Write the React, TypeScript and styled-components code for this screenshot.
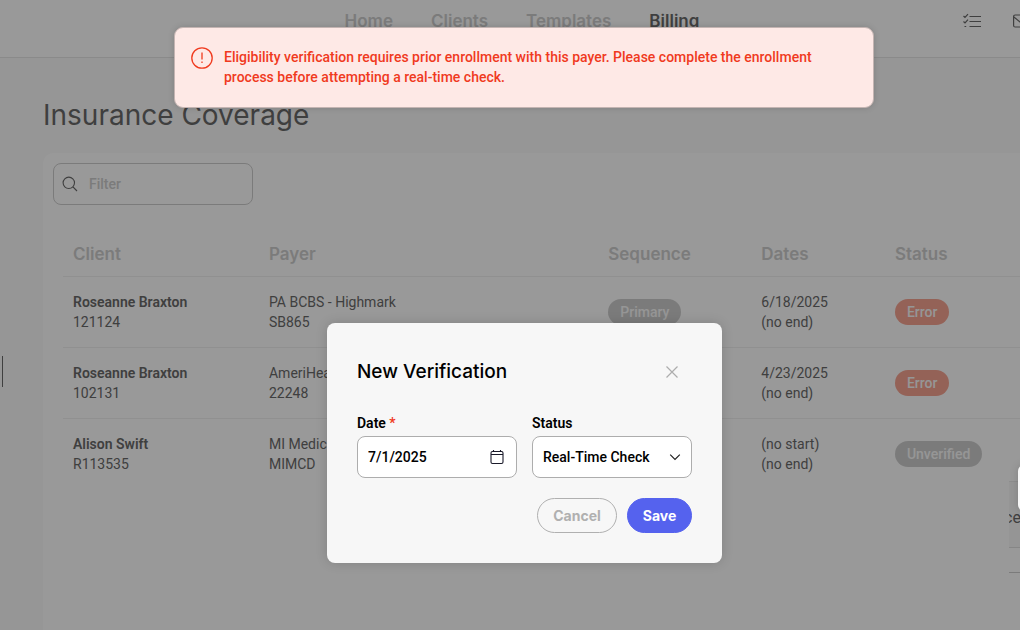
import React from "react";
import styled, { createGlobalStyle } from "styled-components";

const displayFont = `Inter, "Liberation Sans", sans-serif`;

const GlobalStyle = createGlobalStyle`
  *, *::before, *::after { box-sizing: border-box; }
  html { overflow: hidden; }
  body { margin: 0; background: #fafafa; }
  body, button, input, select {
    font-family: Roboto, "Liberation Sans", sans-serif;
    font-size: 14px;
    line-height: 20px;
  }
`;

/* The application canvas is a little wider than the window and is clipped on the right. */
const Shell = styled.div`
  position: relative;
  width: calc(100% + 28px);
  min-height: 100vh;
  display: flex;
  flex-direction: column;
  color: #6a6a6a;
`;

const Header = styled.header`
  display: grid;
  grid-template-columns: 1fr auto 1fr;
  height: 58px;
  background: #ffffff;
  border-bottom: 1px solid #e6e6e6;
`;

const Nav = styled.nav`
  grid-column: 2;
  display: flex;
  gap: 38px;
  padding: 11px 4px 0 0;
`;

const NavLink = styled.a<{ $active?: boolean }>`
  font-family: ${displayFont};
  font-size: 17px;
  font-weight: 600;
  text-decoration: none;
  color: ${(p) => (p.$active ? "#6a6a6a" : "#cecece")};
`;

const Tools = styled.div`
  display: flex;
  justify-content: flex-end;
  align-items: flex-start;
  gap: 32px;
  padding: 13px 17px 0 0;
`;

const IconButton = styled.button`
  display: flex;
  align-items: center;
  justify-content: center;
  padding: 0;
  border: 0;
  background: none;
  color: inherit;
`;

const Main = styled.main`
  flex: 1;
  display: flex;
  flex-direction: column;
  padding: 42px 0 0 43px;
`;

const PageTitle = styled.h1`
  margin: 0 0 23px;
  font-family: ${displayFont};
  font-size: 28px;
  line-height: 30px;
  font-weight: 400;
`;

const Panel = styled.section`
  flex: 1;
  padding: 10px;
  background: #ffffff;
  border-radius: 10px 0 0 0;
`;

const Search = styled.label`
  display: flex;
  align-items: center;
  gap: 11px;
  width: 200px;
  height: 42px;
  padding: 0 8px;
  border: 1px solid #cecece;
  border-radius: 8px;
`;

const SearchInput = styled.input`
  min-width: 0;
  flex: 1;
  padding: 0;
  border: 0;
  outline: 0;
  background: none;
  color: inherit;
  font-weight: 500;
  &::placeholder { color: #cecece; opacity: 1; }
`;

const Table = styled.table`
  width: calc(100% - 10px);
  margin: 28px 0 0 10px;
  table-layout: fixed;
  border-collapse: collapse;
  text-align: left;
`;

const Col = styled.col<{ $share?: number }>`
  width: ${(p) => (p.$share ? `${p.$share}%` : "auto")};
`;

const HeadCell = styled.th`
  height: 43px;
  padding: 0 10px;
  border-bottom: 1px solid #f1f1f1;
  color: #cecece;
  font-family: ${displayFont};
  font-size: 17px;
  font-weight: 600;
`;

const Row = styled.tr`
  & + & > td { border-top: 1px solid #f1f1f1; }
`;

const Cell = styled.td`
  height: 71px;
  padding: 0 10px;
  white-space: nowrap;
`;

const Line = styled.div<{ $strong?: boolean }>`
  font-weight: ${(p) => (p.$strong ? 600 : 400)};
`;

const Pill = styled.span<{ $tone: "error" | "neutral" }>`
  display: inline-block;
  padding: 3px 12px;
  border-radius: 13px;
  font-weight: 500;
  color: #fafafa;
  background: ${(p) => (p.$tone === "error" ? "#f7a391" : "#cecece")};
`;

const EdgeHandle = styled.div`
  position: absolute;
  left: 2px;
  top: 356px;
  width: 1px;
  height: 31px;
  background: #6a6a6a;
`;

const SidePeek = styled.aside`
  position: absolute;
  left: calc(100% - 39px);
  top: 481px;
  width: 39px;
  display: flex;
  flex-direction: column;
  overflow: hidden;
`;

const PeekBlock = styled.div<{ $height: number; $line: string; $shade?: boolean }>`
  display: flex;
  align-items: center;
  height: ${(p) => p.$height}px;
  padding-top: 6px;
  border-top: 1px solid ${(p) => p.$line};
  background: ${(p) => (p.$shade ? "#f9f9f9" : "#ffffff")};
  font-size: 16px;
`;

const PeekText = styled.span`
  margin-left: -5px;
`;

const Backdrop = styled.div`
  position: absolute;
  inset: 0;
  background: rgba(0, 0, 0, 0.4);
`;

const PeekCard = styled.div`
  position: absolute;
  left: calc(100% - 30px);
  top: 465px;
  width: 30px;
  height: 46px;
  border-radius: 6px;
  background: #f7f7f7;
  box-shadow: 0 0 8px rgba(0, 0, 0, 0.15);
`;

const Alert = styled.div`
  position: absolute;
  top: 27px;
  left: 50%;
  transform: translateX(-50%);
  width: 700px;
  height: 81px;
  display: flex;
  gap: 11px;
  padding: 19px 50px 19px 16px;
  border: 1px solid #c4b4b2;
  border-radius: 9px;
  background: #fee9e6;
  color: #f03a1e;
  font-weight: 500;
  box-shadow: 0 0 6px rgba(0, 0, 0, 0.15);
`;

const AlertIcon = styled.svg`
  flex: none;
`;

const AlertText = styled.p`
  margin: 0;
`;

const Dialog = styled.form`
  position: absolute;
  top: 323px;
  left: calc(50% - 197px);
  width: 395px;
  padding: 30px;
  border-radius: 8px;
  background: #f7f7f7;
  color: #000000;
  box-shadow: 0 0 12px rgba(0, 0, 0, 0.15);
`;

const DialogHead = styled.div`
  display: flex;
  align-items: center;
  justify-content: space-between;
  height: 37px;
  margin-bottom: 23px;
`;

const DialogTitle = styled.h2`
  margin: 0;
  font-family: ${displayFont};
  font-size: 19px;
  font-weight: 500;
`;

const CloseButton = styled(IconButton)`
  width: 40px;
  height: 36px;
  color: #adadad;
`;

const Fields = styled.div`
  display: grid;
  grid-template-columns: 1fr 1fr;
  gap: 15px;
`;

const Field = styled.div`
  display: flex;
  flex-direction: column;
  gap: 3px;
`;

const Label = styled.label`
  font-weight: 600;
`;

const Required = styled.span`
  color: #f03a1e;
`;

const Control = styled.div`
  position: relative;
  display: flex;
`;

const controlStyle = `
  width: 100%;
  height: 42px;
  padding: 0 10px;
  border: 1px solid #adadad;
  border-radius: 8px;
  background: #ffffff;
  color: #000000;
  font-weight: 500;
  appearance: none;
`;

const TextInput = styled.input`${controlStyle}`;
const Select = styled.select`${controlStyle}`;

const ControlIcon = styled.svg`
  position: absolute;
  top: 50%;
  right: 11px;
  transform: translateY(-50%);
  pointer-events: none;
`;

const Actions = styled.div`
  display: flex;
  justify-content: flex-end;
  gap: 10px;
  margin-top: 20px;
`;

const ActionButton = styled.button<{ $primary?: boolean }>`
  min-width: ${(p) => (p.$primary ? 65 : 80)}px;
  height: 35px;
  padding: 0 13px;
  border: 1px solid ${(p) => (p.$primary ? "#5562ee" : "#b0b0b0")};
  border-radius: 18px;
  background: ${(p) => (p.$primary ? "#5562ee" : "transparent")};
  color: ${(p) => (p.$primary ? "#ffffff" : "#b0b0b0")};
  font-family: ${displayFont};
  font-size: 14px;
  font-weight: 700;
`;

type Coverage = {
  client: [string, string];
  payer: [string, string];
  sequence: string;
  dates: [string, string];
  status: string;
};

const coverages: Coverage[] = [
  { client: ["Roseanne Braxton", "121124"], payer: ["PA BCBS - Highmark", "SB865"], sequence: "Primary", dates: ["6/18/2025", "(no end)"], status: "Error" },
  { client: ["Roseanne Braxton", "102131"], payer: ["AmeriHealth", "22248"], sequence: "Primary", dates: ["4/23/2025", "(no end)"], status: "Error" },
  { client: ["Alison Swift", "R113535"], payer: ["MI Medicaid", "MIMCD"], sequence: "Primary", dates: ["(no start)", "(no end)"], status: "Unverified" },
];

export default function App() {
  return (
    <>
      <GlobalStyle />
      <Shell>
        <Header>
          <Nav aria-label="Main">
            <NavLink href="#home">Home</NavLink>
            <NavLink href="#clients">Clients</NavLink>
            <NavLink href="#templates">Templates</NavLink>
            <NavLink href="#billing" $active aria-current="page">Billing</NavLink>
          </Nav>
          <Tools>
            <IconButton type="button" aria-label="Tasks">
              <svg width="18" height="16" viewBox="0 0 18 16" fill="none" stroke="currentColor" strokeWidth="1.2">
                <path d="M0.5 3 2 4.5 5 1.2M0.5 8.5 2 10 5 6.7M6.5 3.5H18M6.5 8.5H18M6.5 13.5H18M1.5 13.5H3.2" />
              </svg>
            </IconButton>
            <IconButton type="button" aria-label="Messages">
              <svg width="18" height="16" viewBox="0 0 18 16" fill="none" stroke="currentColor" strokeWidth="1.2">
                <rect x="0.6" y="2" width="16.8" height="12" rx="1.5" />
                <path d="M0.8 4 9 10.5 17.2 4" />
              </svg>
            </IconButton>
          </Tools>
        </Header>

        <Main>
          <PageTitle>Insurance Coverage</PageTitle>
          <Panel>
            <Search>
              <svg width="16" height="16" viewBox="0 0 16 16" fill="none" stroke="currentColor" strokeWidth="1.1">
                <circle cx="6.8" cy="6.8" r="5.7" />
                <path d="M11 11 15 15" />
              </svg>
              <SearchInput aria-label="Filter" placeholder="Filter" />
            </Search>
            <Table>
              <colgroup>
                <Col $share={20.1} />
                <Col $share={34.8} />
                <Col $share={15.7} />
                <Col $share={13.7} />
                <Col />
              </colgroup>
              <thead>
                <tr>
                  <HeadCell>Client</HeadCell>
                  <HeadCell>Payer</HeadCell>
                  <HeadCell>Sequence</HeadCell>
                  <HeadCell>Dates</HeadCell>
                  <HeadCell>Status</HeadCell>
                </tr>
              </thead>
              <tbody>
                {coverages.map((c) => (
                  <Row key={c.client[1]}>
                    <Cell>
                      <Line $strong>{c.client[0]}</Line>
                      <Line>{c.client[1]}</Line>
                    </Cell>
                    <Cell>
                      <Line>{c.payer[0]}</Line>
                      <Line>{c.payer[1]}</Line>
                    </Cell>
                    <Cell><Pill $tone="neutral">{c.sequence}</Pill></Cell>
                    <Cell>
                      <Line>{c.dates[0]}</Line>
                      <Line>{c.dates[1]}</Line>
                    </Cell>
                    <Cell><Pill $tone={c.status === "Error" ? "error" : "neutral"}>{c.status}</Pill></Cell>
                  </Row>
                ))}
              </tbody>
            </Table>
          </Panel>
        </Main>

        <EdgeHandle />
        <SidePeek>
          <PeekBlock $height={66} $line="#ececec" $shade><PeekText>ce</PeekText></PeekBlock>
          <PeekBlock $height={25} $line="#e0e0e0" />
          <PeekBlock $height={45} $line="#cecece" />
        </SidePeek>

        <Backdrop />
        <PeekCard />

        <Dialog aria-labelledby="dialog-title" onSubmit={(e) => e.preventDefault()}>
          <DialogHead>
            <DialogTitle id="dialog-title">New Verification</DialogTitle>
            <CloseButton type="button" aria-label="Close">
              <svg width="12" height="12" viewBox="0 0 12 12" fill="none" stroke="currentColor" strokeWidth="1.2">
                <path d="M0.5 0.5 11.5 11.5M11.5 0.5 0.5 11.5" />
              </svg>
            </CloseButton>
          </DialogHead>
          <Fields>
            <Field>
              <Label htmlFor="date">Date <Required>*</Required></Label>
              <Control>
                <TextInput id="date" defaultValue="7/1/2025" />
                <ControlIcon width="18" height="18" viewBox="0 0 18 18" fill="none" stroke="#1a1a2a" strokeWidth="1.1">
                  <rect x="3" y="3.5" width="12" height="12" rx="1.5" />
                  <path d="M3 6.5H15M5.5 2V4M12.5 2V4" />
                </ControlIcon>
              </Control>
            </Field>
            <Field>
              <Label htmlFor="status">Status</Label>
              <Control>
                <Select id="status" defaultValue="rt">
                  <option value="rt">Real-Time Check</option>
                </Select>
                <ControlIcon width="12" height="12" viewBox="0 0 12 12" fill="none" stroke="#1a1a1a" strokeWidth="1.1">
                  <path d="M1.2 3.6 6 8.4 10.8 3.6" />
                </ControlIcon>
              </Control>
            </Field>
          </Fields>
          <Actions>
            <ActionButton type="button">Cancel</ActionButton>
            <ActionButton type="submit" $primary>Save</ActionButton>
          </Actions>
        </Dialog>

        <Alert role="alert">
          <AlertIcon width="22" height="22" viewBox="0 0 22 22" fill="none" stroke="currentColor" strokeWidth="1.3">
            <circle cx="11" cy="11" r="10.2" />
            <path d="M11 5.5V12.5M11 14.5V16" />
          </AlertIcon>
          <AlertText>
            Eligibility verification requires prior enrollment with this payer. Please complete the enrollment process before attempting a real-time check.
          </AlertText>
        </Alert>
      </Shell>
    </>
  );
}
